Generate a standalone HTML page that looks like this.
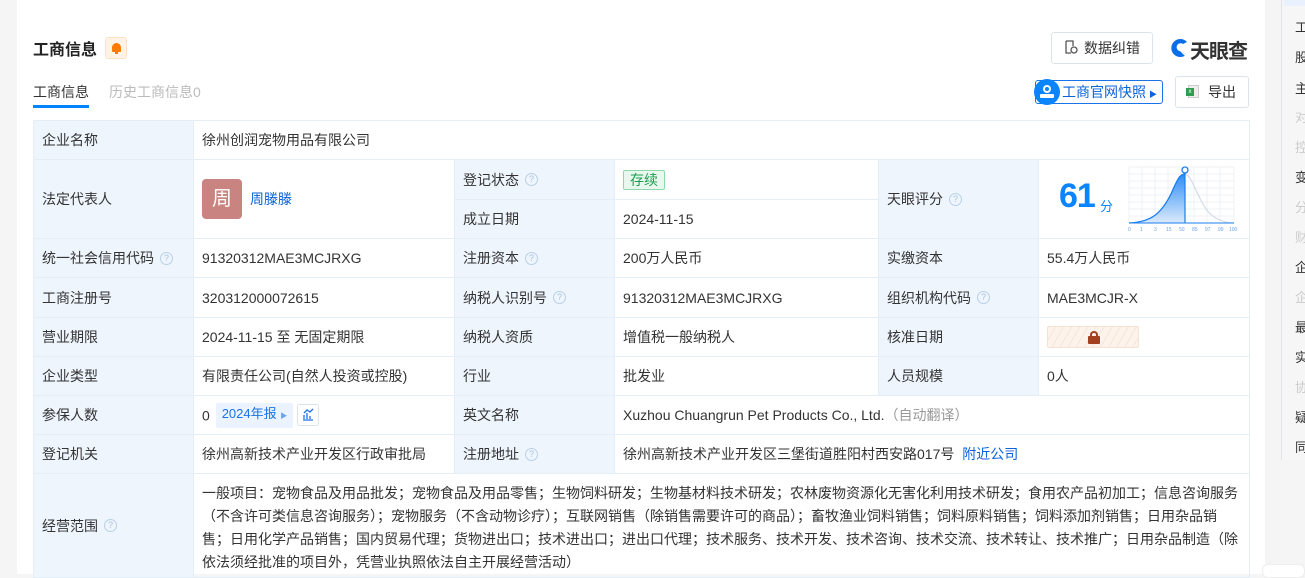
<!DOCTYPE html>
<html><head><meta charset="utf-8"><style>
*{margin:0;padding:0;box-sizing:border-box}
body{width:1305px;height:574px;overflow:hidden;background:#f5f5f5;font-family:"Liberation Sans","Noto Sans CJK SC",sans-serif;color:#333;font-size:14px;position:relative}
.card{position:absolute;left:17px;top:0;width:1248px;height:574px;background:#fff}
.abs{position:absolute}
table{position:absolute;left:33px;top:120px;border-collapse:collapse;table-layout:fixed;width:1216px}
td{border:1px solid #e4eef7;padding:0 8px;font-size:14px;color:#333;vertical-align:middle;white-space:nowrap;line-height:20px}
td.l{background:#eef5fd}
.q{display:inline-block;width:13px;height:13px;border:1px solid #b9cfe6;border-radius:50%;color:#a9c2dc;font-size:9px;line-height:11px;text-align:center;margin-left:6px;vertical-align:middle;position:relative;top:-1px}
.side{position:absolute;left:1281px;top:0;width:24px;height:460px;border-left:1px solid #e2e2e8;background:#f6f6f6}
.side div{position:absolute;left:13px;font-size:13px;color:#333}
</style></head><body>
<div class="card"></div>
<div class="side">
<div style="top:0;left:2px;width:22px;height:6px;background:#e8f1fd"></div>
<div style="top:17px">工</div><div style="top:47px">股</div><div style="top:78px">主</div>
<div style="top:107px;color:#ccc">对</div><div style="top:137px;color:#ccc">控</div><div style="top:167px">变</div>
<div style="top:197px;color:#ccc">分</div><div style="top:227px;color:#ccc">财</div><div style="top:257px">企</div>
<div style="top:287px;color:#ccc">企</div><div style="top:317px">最</div><div style="top:347px">实</div>
<div style="top:377px;color:#ccc">协</div><div style="top:407px">疑</div><div style="top:437px">同</div>
</div>
<div class="abs" style="left:1262px;top:564px;width:43px;height:14px;background:#fff;border:1px solid #eee;border-radius:6px"></div>

<div class="abs" style="left:33px;top:36px;font-size:16px;font-weight:bold;color:#222">工商信息</div>
<div class="abs" style="left:105px;top:37px;width:22px;height:22px;background:#fff3e8;border:1px solid #fde0c6;border-radius:3px"><div style="position:absolute;left:6px;top:5px;width:9px;height:9px;background:#ff7a00;border-radius:5px 5px 1px 1px"></div><div style="position:absolute;left:9px;top:14px;width:3px;height:2px;background:#ff7a00"></div></div>
<div class="abs" style="left:33px;top:82px;font-size:14px;color:#333">工商信息</div>
<div class="abs" style="left:33px;top:105px;width:56px;height:3px;background:#0084ff"></div>
<div class="abs" style="left:109px;top:82px;font-size:14px;color:#bbb">历史工商信息0</div>

<div class="abs" style="left:1051px;top:32px;width:102px;height:32px;border:1px solid #dde3ea;border-radius:3px;font-size:14px;line-height:30px;padding-left:32px">数据纠错</div>
<svg class="abs" style="left:1064px;top:40px" width="14" height="15" viewBox="0 0 14 15"><path d="M2 1h7v5M2 1v12h5" fill="none" stroke="#555" stroke-width="1.3"/><circle cx="10" cy="10" r="3" fill="none" stroke="#555" stroke-width="1.3"/></svg>
<svg class="abs" style="left:1169px;top:38px" width="21" height="20" viewBox="0 0 21 20"><path d="M18 4A9 9 0 1 0 17 17L13 13A4 4 0 1 1 14 6Z" fill="#0a6ee8"/><path d="M9 10l9 9" stroke="#fff" stroke-width="1.5"/></svg>
<div class="abs" style="left:1190px;top:35px;font-size:20px;font-weight:bold;color:#333;letter-spacing:-1px">天眼查</div>

<div class="abs" style="left:1035px;top:80px;width:128px;height:24px;border:1px solid #1a73e8;border-radius:3px;font-size:14px;line-height:22px;padding-left:26px;color:#0a63d8">工商官网快照<span style="font-size:8px;margin-left:3px">▶</span></div>
<div class="abs" style="left:1034px;top:79px;width:26px;height:26px;border-radius:50%;background:#0a84ff"><div style="position:absolute;left:9px;top:6px;width:8px;height:8px;border:2px solid #fff;border-radius:50%"></div><div style="position:absolute;left:6px;top:15px;width:14px;height:4px;border:2px solid #fff;border-radius:1px"></div></div>
<div class="abs" style="left:1175px;top:76px;width:74px;height:32px;border:1px solid #dde3ea;border-radius:3px;font-size:14px;line-height:30px;padding-left:32px">导出</div>
<div class="abs" style="left:1188px;top:85px;width:11px;height:13px;background:#eee;border:1px solid #ccc"></div>
<div class="abs" style="left:1186px;top:88px;width:8px;height:8px;background:#2e9d4f;color:#fff;font-size:6px;line-height:8px;text-align:center">x</div>

<table>
<colgroup><col style="width:160px"><col style="width:261px"><col style="width:160px"><col style="width:264px"><col style="width:160px"><col style="width:211px"></colgroup>
<tr style="height:39px"><td class="l">企业名称</td><td colspan="5">徐州创润宠物用品有限公司</td></tr>
<tr style="height:40px"><td class="l" rowspan="2">法定代表人</td><td rowspan="2"><span style="display:inline-block;width:40px;height:40px;background:#c98380;border-radius:4px;color:#fff;font-size:20px;line-height:40px;text-align:center;vertical-align:middle">周</span><span style="color:#0a63d8;margin-left:8px;vertical-align:middle">周滕滕</span></td><td class="l">登记状态<span class="q">?</span></td><td><span style="display:inline-block;border:1px solid #8fd8a8;background:#e8f8ee;color:#1f9d4f;padding:0 6px;line-height:18px;border-radius:2px">存续</span></td><td class="l" rowspan="2">天眼评分<span class="q">?</span></td><td rowspan="2" style="position:relative"></td></tr>
<tr style="height:39px"><td class="l">成立日期</td><td>2024-11-15</td></tr>
<tr style="height:39px"><td class="l">统一社会信用代码<span class="q">?</span></td><td>91320312MAE3MCJRXG</td><td class="l">注册资本<span class="q">?</span></td><td>200万人民币</td><td class="l">实缴资本</td><td>55.4万人民币</td></tr>
<tr style="height:40px"><td class="l">工商注册号</td><td>320312000072615</td><td class="l">纳税人识别号<span class="q">?</span></td><td>91320312MAE3MCJRXG</td><td class="l">组织机构代码<span class="q">?</span></td><td>MAE3MCJR-X</td></tr>
<tr style="height:39px"><td class="l">营业期限</td><td>2024-11-15 至 无固定期限</td><td class="l">纳税人资质</td><td>增值税一般纳税人</td><td class="l">核准日期</td><td><span style="display:inline-block;width:92px;height:22px;background:repeating-linear-gradient(120deg,#fdf3ea 0 6px,#f4e6da 6px 7px);border:1px solid #f4e2d2;border-radius:2px;vertical-align:middle;position:relative"><span style="position:absolute;left:40px;top:9px;width:12px;height:8px;background:#a3401f;border-radius:1px"></span><span style="position:absolute;left:42px;top:4px;width:8px;height:7px;border:2px solid #a3401f;border-bottom:none;border-radius:4px 4px 0 0"></span></span></td></tr>
<tr style="height:39px"><td class="l">企业类型</td><td>有限责任公司(自然人投资或控股)</td><td class="l">行业</td><td>批发业</td><td class="l">人员规模</td><td>0人</td></tr>
<tr style="height:39px"><td class="l">参保人数</td><td><span style="vertical-align:middle">0</span> <span style="display:inline-block;vertical-align:middle;background:#eaf3ff;color:#1a73e8;padding:0 6px;line-height:22px;border-radius:2px;margin-left:2px;font-size:13px">2024年报 <span style="font-size:7px;color:#6aa3ee">▶</span></span><svg style="vertical-align:middle;margin-left:4px" width="22" height="22" viewBox="0 0 22 22"><rect x="0.5" y="0.5" width="21" height="21" rx="2" fill="#fff" stroke="#dde3ea"/><path d="M6 16h10M7 15v-4M10 15v-6M13 15v-3M7 9l3-3 3 2 3-3" fill="none" stroke="#1a73e8" stroke-width="1.3"/></svg></td><td class="l">英文名称</td><td colspan="3">Xuzhou Chuangrun Pet Products Co., Ltd.<span style="color:#999">（自动翻译）</span></td></tr>
<tr style="height:39px"><td class="l">登记机关</td><td>徐州高新技术产业开发区行政审批局</td><td class="l">注册地址<span class="q">?</span></td><td colspan="3">徐州高新技术产业开发区三堡街道胜阳村西安路017号 <span style="color:#0a63d8;margin-left:4px">附近公司</span></td></tr>
<tr style="height:104px"><td class="l">经营范围<span class="q">?</span></td><td colspan="5" style="line-height:23px;padding-top:8px;vertical-align:top;white-space:nowrap">一般项目：宠物食品及用品批发；宠物食品及用品零售；生物饲料研发；生物基材料技术研发；农林废物资源化无害化利用技术研发；食用农产品初加工；信息咨询服务<br>（不含许可类信息咨询服务）；宠物服务（不含动物诊疗）；互联网销售（除销售需要许可的商品）；畜牧渔业饲料销售；饲料原料销售；饲料添加剂销售；日用杂品销<br>售；日用化学产品销售；国内贸易代理；货物进出口；技术进出口；进出口代理；技术服务、技术开发、技术咨询、技术交流、技术转让、技术推广；日用杂品制造（除<br>依法须经批准的项目外，凭营业执照依法自主开展经营活动）</td></tr>
</table>

<div class="abs" style="left:1059px;top:177px;font-size:34px;font-weight:bold;color:#0a84ff;letter-spacing:-1px">61</div>
<div class="abs" style="left:1100px;top:196px;font-size:13px;color:#0a84ff">分</div>
<svg class="abs" style="left:1126px;top:164px" width="116" height="72" viewBox="0 0 116 72">
<defs><linearGradient id="g" x1="0" y1="0" x2="0" y2="1"><stop offset="0" stop-color="#2d8cf5"/><stop offset="1" stop-color="#dbeafc"/></linearGradient></defs>
<g stroke="#eef1f5" stroke-width="1"><path d="M3 3h105M3 10h105M3 17h105M3 24h105M3 31h105M3 38h105M3 45h105M3 52h105M3 59h105"/><path d="M3 3v56M16 3v56M29 3v56M42 3v56M55 3v56M68 3v56M81 3v56M94 3v56M108 3v56"/></g>
<path d="M3 59C25 58 35 50 45 30C52 14 54 10 59 10V59Z" fill="url(#g)"/>
<path d="M3 59C25 58 35 50 45 30C52 14 54 10 59 10" fill="none" stroke="#1a7ef0" stroke-width="1.3"/>
<path d="M59 10C66 12 70 30 80 45C88 56 100 59 108 59" fill="none" stroke="#d3dce6" stroke-width="1.2"/>
<path d="M3 59h105" stroke="#1a7ef0" stroke-width="1"/>
<path d="M59 7v52" stroke="#1a7ef0" stroke-width="1.2"/>
<circle cx="59" cy="6" r="3" fill="#fff" stroke="#1a7ef0" stroke-width="1.3"/>
<g font-size="5" fill="#6aa3ee" font-family="Liberation Sans"><text x="2" y="67">0</text><text x="14" y="67">1</text><text x="28" y="67">3</text><text x="40" y="67">15</text><text x="53" y="67">50</text><text x="66" y="67">85</text><text x="79" y="67">97</text><text x="92" y="67">99</text><text x="103" y="67">100</text></g>
</svg>
</body></html>
